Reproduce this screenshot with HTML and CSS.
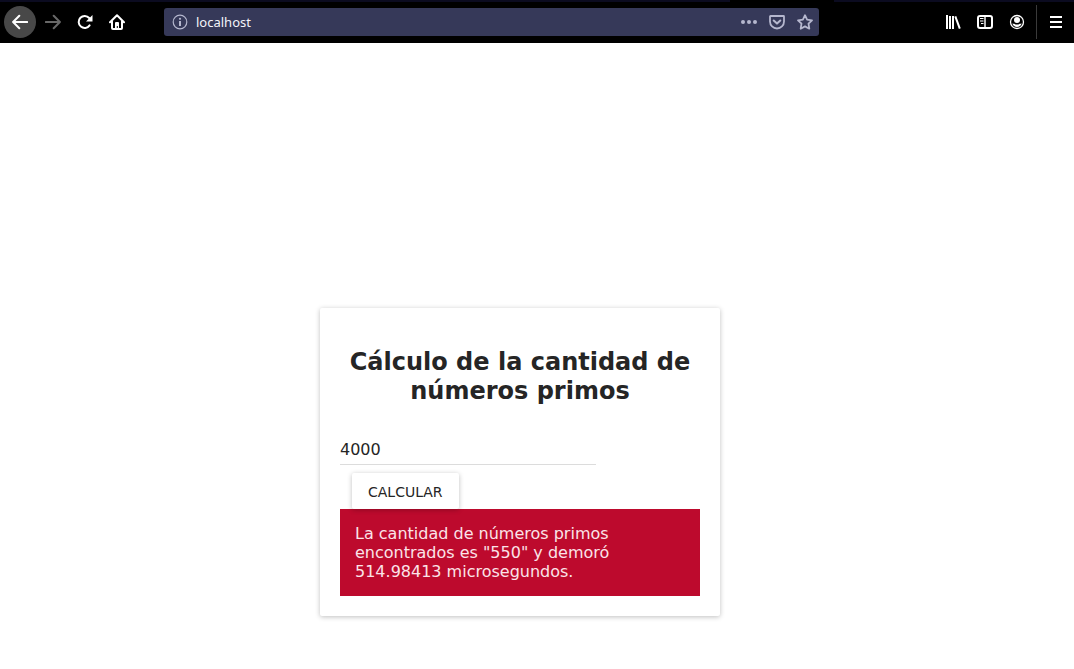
FILE: index.html
```html
<!DOCTYPE html>
<html lang="es">
<head>
<meta charset="utf-8">
<meta name="viewport" content="width=device-width, initial-scale=1">
<title>localhost</title>
<link rel="stylesheet" href="styles.css">
</head>
<body>
<header class="browser">
  <div class="tab-strip"><span class="active-tab"></span></div>
  <nav class="toolbar" aria-label="Navegador">
    <button class="tool back" aria-label="Atrás"><svg viewBox="0 0 16 16"><path d="M15.2 8H1.5M7.3 1.8 1.1 8l6.2 6.2" fill="none" stroke="currentColor" stroke-width="2" stroke-linecap="round" stroke-linejoin="round"/></svg></button>
    <button class="tool forward" aria-label="Adelante" disabled><svg viewBox="0 0 16 16"><path d="M.8 8h13.700M8.700 1.800 14.900 8l-6.200 6.200" fill="none" stroke="currentColor" stroke-width="2" stroke-linecap="round" stroke-linejoin="round"/></svg></button>
    <button class="tool" aria-label="Recargar"><svg viewBox="0 0 16 16"><path d="M12.600 11.400A6 6 0 1 1 12.200 4" fill="none" stroke="currentColor" stroke-width="2" stroke-linecap="round"/><path d="M15.500 1v6.500H9z" fill="currentColor"/></svg></button>
    <button class="tool" aria-label="Inicio"><svg viewBox="0 0 16 16"><path d="M1 8.300 8 1.300l7 7M3 7.500V14a1 1 0 0 0 1 1h8a1 1 0 0 0 1-1V7.500" fill="none" stroke="currentColor" stroke-width="2" stroke-linecap="round" stroke-linejoin="round"/><path d="M6 15V9a1 1 0 0 1 1-1h2a1 1 0 0 1 1 1v6H8.800v-3H7.800v3z" fill="currentColor"/></svg></button>
    <div class="address">
      <svg class="info" viewBox="0 0 16 16"><circle cx="8" cy="8" r="6.800" fill="none" stroke="currentColor" stroke-width="1.200"/><path d="M8 7v5" stroke="currentColor" stroke-width="2"/><circle cx="8" cy="4.800" r="1.100" fill="currentColor"/></svg>
      <input class="url" type="text" value="localhost" aria-label="Dirección">
      <button class="action" aria-label="Acciones de página"><svg viewBox="0 0 16 16" fill="currentColor"><circle cx="2" cy="8" r="2"/><circle cx="8" cy="8" r="2"/><circle cx="14" cy="8" r="2"/></svg></button>
      <button class="action" aria-label="Guardar en Pocket"><svg viewBox="0 0 16 16" fill="none" stroke="currentColor" stroke-width="2" stroke-linecap="round" stroke-linejoin="round"><path d="M1.500 2h13a.5.5 0 0 1 .5.5V7.500a7 7 0 0 1-14 0v-5a.5.5 0 0 1 .5-.5z" stroke-width="1.800"/><path d="M4.700 6.500 8 9.600l3.300-3.100"/></svg></button>
      <button class="action" aria-label="Marcador"><svg viewBox="0 0 16 16"><path d="m8 1.200 2.100 4.400 4.900.7-3.500 3.400.8 5L8 12.400l-4.300 2.300.8-5L1 6.300l4.900-.7z" fill="none" stroke="currentColor" stroke-width="1.800" stroke-linejoin="round"/></svg></button>
    </div>
    <button class="tool" aria-label="Biblioteca"><svg viewBox="0 0 16 16" fill="none" stroke="currentColor" stroke-width="2"><path d="M2 1v14M5 2v13M8 2v13M10.300 2.300 14.800 14.700"/></svg></button>
    <button class="tool" aria-label="Barra lateral"><svg viewBox="0 0 16 16" fill="none" stroke="currentColor"><rect x="1" y="2" width="14" height="12" rx="2" stroke-width="2"/><path d="M8 2v12" stroke-width="1.400"/><path d="M3 4.500h3.500M3 7h3.500M4 9.500h2.500"/></svg></button>
    <button class="tool" aria-label="Cuenta"><svg viewBox="0 0 16 16"><circle cx="8" cy="8" r="6.500" fill="none" stroke="currentColor" stroke-width="1.300"/><circle cx="8" cy="6" r="3" fill="currentColor"/><path d="M3.300 9.500c1 .2 1.500.2 2 .2 1.500 1.200 3.900 1.200 5.400 0 .5 0 1 0 2-.2-.7 2.300-2.400 3.500-4.700 3.500S4 11.800 3.300 9.500z" fill="currentColor"/></svg></button>
    <span class="separator"></span>
    <button class="tool" aria-label="Menú"><svg viewBox="0 0 16 16"><path d="M3 3h10M3 8h10M3 13h10" fill="none" stroke="currentColor" stroke-width="2" stroke-linecap="square"/></svg></button>
  </nav>
</header>
<main class="page">
  <section class="card">
    <h1 class="title">Cálculo de la cantidad de números primos</h1>
    <form class="form">
      <input class="number" type="text" value="4000" aria-label="Número">
      <button class="submit" type="button">CALCULAR</button>
    </form>
    <p class="result">La cantidad de números primos encontrados es "550" y demoró 514.98413 microsegundos.</p>
  </section>
</main>
</body>
</html>
```
FILE: styles.css
```css
* {
  box-sizing: border-box;
}

body {
  margin: 0;
  background: #fff;
  color: #252525;
  font-family: "DejaVu Sans", sans-serif;
  font-size: 16px;
}

button,
input {
  margin: 0;
  padding: 0;
  border: 0;
  background: none;
  color: inherit;
  font-family: inherit;
}

.browser {
  background: #000;
  color: #fff;
}

.tab-strip {
  display: flex;
  height: 2px;
  padding-left: 68%;
  background: #0b0b20;
}

.active-tab {
  width: 104px;
  background: #000;
}

.toolbar {
  display: flex;
  align-items: center;
  height: 41px;
  padding: 0 2px 1px 4px;
}

.tool {
  display: flex;
  flex: none;
  align-items: center;
  justify-content: center;
  width: 32px;
  height: 32px;
}

.tool svg,
.action svg,
.info {
  display: block;
  width: 16px;
  height: 16px;
}

.back {
  margin-right: 1px;
  border-radius: 50%;
  background: #484848;
}

.forward {
  color: #686868;
}

.address {
  display: flex;
  flex: 1;
  align-items: center;
  min-width: 0;
  height: 28px;
  margin: 0 118px 0 31px;
  padding: 0 6px 0 8px;
  border-radius: 3px;
  background: #363959;
  color: #b5b7ce;
}

.info {
  flex: none;
  margin-right: 8px;
}

.url {
  flex: 1;
  min-width: 0;
  color: #f3f3fa;
  font-family: "Noto Sans", sans-serif;
  font-size: 13px;
  line-height: 20px;
}

.action {
  flex: none;
  margin-left: 12px;
}

.separator {
  flex: none;
  width: 1px;
  height: 34px;
  margin: 0 3px;
  background: #3a3a3a;
}

.page {
  display: flex;
  justify-content: center;
  padding: 265px 34px 50px 0;
}

.card {
  width: 400px;
  max-width: 100%;
  padding: 20px;
  border-radius: 2px;
  background: #fff;
  box-shadow: 0 1px 5px rgba(0, 0, 0, 0.25);
}

.title {
  margin: 20px 0 27px;
  font-size: 24px;
  line-height: 29px;
  text-align: center;
}

.form {
  display: flex;
  flex-direction: column;
  align-items: flex-start;
  gap: 8px;
}

.number {
  width: 256px;
  height: 32px;
  padding-top: 2px;
  border-bottom: 1px solid #dcdcdc;
  font-size: 16px;
}

.submit {
  position: relative;
  height: 36px;
  margin-left: 12px;
  padding: 2px 16px 0;
  border-radius: 2px;
  background: #fff;
  box-shadow: 0 1px 5px rgba(0, 0, 0, 0.25);
  font-size: 14px;
}

.result {
  margin: 0;
  padding: 15px;
  background: #bd0a2d;
  color: #fbe3e8;
  line-height: 19px;
}
```
